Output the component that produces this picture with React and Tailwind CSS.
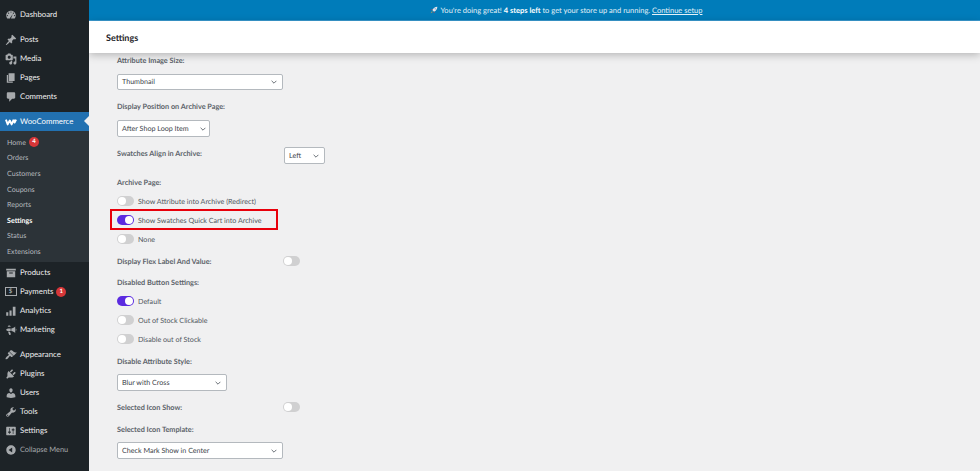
import React from "react";

const P = {
  dashboard: "M3.76 16h12.48c1.1-1.37 1.76-3.11 1.76-5 0-4.42-3.58-8-8-8s-8 3.58-8 8c0 1.89.66 3.63 1.76 5zM10 4c.55 0 1 .45 1 1s-.45 1-1 1-1-.45-1-1 .45-1 1-1zM6 6c.55 0 1 .45 1 1s-.45 1-1 1-1-.45-1-1 .45-1 1-1zm8 0c.55 0 1 .45 1 1s-.45 1-1 1-1-.45-1-1 .45-1 1-1zm-5.4 8.6L13 8.500l-2.900 6.900c-.4.8-2.200.1-1.500-.8zM4 10c.55 0 1 .45 1 1s-.45 1-1 1-1-.45-1-1 .45-1 1-1zm12 0c.55 0 1 .45 1 1s-.45 1-1 1-1-.45-1-1 .45-1 1-1z",
  posts: "M10.44 3.02l1.82-1.82 6.36 6.35-1.83 1.82c-1.05-.68-2.48-.57-3.41.36l-.75.75c-.92.93-1.04 2.35-.35 3.41l-1.83 1.82-2.41-2.41-2.8 2.79c-.42.42-3.38 2.71-3.8 2.29s1.86-3.39 2.28-3.81l2.79-2.79L4.1 9.36l1.83-1.82c1.05.69 2.48.57 3.4-.36l.75-.75c.93-.92 1.05-2.35.36-3.41z",
  media: "M13 11V4c0-.55-.45-1-1-1h-1.67L9 1H5L3.67 3H2c-.55 0-1 .45-1 1v7c0 .55.45 1 1 1h10c.55 0 1-.45 1-1zM7 4.5c1.38 0 2.5 1.12 2.5 2.5S8.38 9.5 7 9.5 4.5 8.38 4.5 7 5.62 4.5 7 4.5zM14 6h5v10.5c0 1.38-1.12 2.5-2.5 2.5S14 17.88 14 16.5s1.12-2.5 2.5-2.5c.17 0 .34.02.5.05V9h-3V6zm-4 8.05V13h2v3.5c0 1.38-1.12 2.5-2.5 2.5S7 17.88 7 16.5 8.12 14 9.5 14c.17 0 .34.02.5.05z",
  pages: "M6 15V2h10v13H6zm-1 1h8v2H3V5h2v11z",
  comments: "M5 2h10c1.1 0 2 .9 2 2v7c0 1.1-.9 2-2 2h-3l-5 5v-5H5c-1.1 0-2-.9-2-2V4c0-1.1.9-2 2-2z",
  products: "M2 3h16v3H2V3zm1 4h14v10H3V7zm4 2v2h6V9H7z",
  analytics: "M2 12h3.500v6H2v-6zm5.500-3H11v9H7.500V9zM13 3h4.500v15H13V3z",
  marketing: "M18 7.500c.6.5 1 1.200 1 2s-.4 1.500-1 2V7.500zM17 4v11c-1.500-1.800-4-3-6.500-3.300V7.300C13 7 15.500 5.800 17 4zM9.500 7.300v4.400H6.500c-2.500 0-4.500-1-4.500-2.200S4 7.300 6.500 7.300h3zM5 12.700l3.300.2 1.700 4.600-3 .8L5 12.700zM7 2.500c1.200 0 2.200.8 2.500 2H4.500c.3-1.200 1.300-2 2.500-2z",
  appearance: "M14.48 11.06L7.41 3.99l1.5-1.5c.5-.56 2.3-.47 3.51.32 1.21.8 1.43 1.28 2.91 2.1 1.18.64 2.45 1.26 4.45.85zm-.71.71L6.7 4.7 4.930 6.470c-.39.39-.39 1.020 0 1.410l1.060 1.060c.39.39.39 1.030 0 1.420-.6.6-1.430 1.110-2.210 1.690-.35.26-.7.53-1.010.84-1.350 1.350-2.280 3.300-1.580 4s2.650-.23 4-1.580c.31-.31.58-.66.84-1.010.58-.78 1.090-1.610 1.690-2.210.39-.39 1.030-.39 1.420 0l1.060 1.060c.39.39 1.020.39 1.410 0z",
  plugins: "M13.11 4.36L9.87 7.6 8 5.73l3.24-3.24c.35-.34 1.05-.2 1.56.32.52.51.66 1.21.31 1.55zm-8 1.77l.91-1.12 9.01 9.01-1.19.84c-.71.71-2.63 1.16-3.82 1.16H6.140L4.900 17.260c-.59.59-1.540.59-2.120 0-.59-.58-.59-1.530 0-2.120l1.240-1.240v-3.880c0-1.130.4-3.190 1.090-3.890zm7.260 3.970l3.240-3.240c.34-.35 1.040-.21 1.550.31.52.51.66 1.210.31 1.550l-3.240 3.250z",
  users: "M10 9.25c-2.270 0-2.730-3.440-2.730-3.440C7 4.020 7.820 2 9.970 2c2.160 0 2.980 2.020 2.710 3.810 0 0-.41 3.440-2.680 3.440zm0 2.570L12.720 10c2.390 0 4.520 2.330 4.520 4.530v2.490s-3.650 1.130-7.240 1.130c-3.650 0-7.240-1.130-7.240-1.130v-2.490c0-2.250 1.940-4.480 4.470-4.480z",
  tools: "M16.680 9.770c-1.340 1.340-3.300 1.670-4.950.99l-5.410 6.520c-.99.99-2.590.99-3.580 0s-.99-2.590 0-3.570l6.520-5.420c-.68-1.650-.35-3.610.99-4.950 1.280-1.280 3.120-1.620 4.720-1.060l-2.890 2.890 2.820 2.820 2.860-2.870c.53 1.580.18 3.390-1.080 4.650zM3.810 16.210c.4.39 1.040.39 1.430 0 .4-.4.4-1.040 0-1.430-.39-.4-1.030-.4-1.430 0-.39.39-.39 1.030 0 1.430z",
  settings: "M18 16V4c0-.55-.45-1-1-1H3c-.55 0-1 .45-1 1v12c0 .55.45 1 1 1h14c.55 0 1-.45 1-1zM8 11h1c.55 0 1 .45 1 1s-.45 1-1 1H8v1.500c0 .28-.22.5-.5.5s-.5-.22-.5-.5V13H6c-.55 0-1-.45-1-1s.45-1 1-1h1V5.500c0-.28.22-.5.5-.5s.5.22.5.5V11zm5-2h-1c-.55 0-1-.45-1-1s.45-1 1-1h1V5.500c0-.28.22-.5.5-.5s.5.22.5.5V7h1c.55 0 1 .45 1 1s-.45 1-1 1h-1v5.500c0 .28-.22.5-.5.5s-.5-.22-.5-.5V9z",
  collapse: "M10 2.160c4.330 0 7.840 3.510 7.840 7.840s-3.510 7.840-7.840 7.840S2.160 14.330 2.160 10 5.670 2.160 10 2.160zM12 14V6l-6 4z",
};

function Ico({ name, color = "#a7aaad", size = 12 }) {
  return (
    <svg viewBox="0 0 20 20" width={size} height={size} className="shrink-0">
      <path d={P[name]} fill={color} fillRule="evenodd" />
    </svg>
  );
}

function PayIcon() {
  return (
    <span className="w-[12px] h-[9px] border border-[#a7aaad] flex items-center justify-center text-[6px] leading-none font-bold text-[#a7aaad] shrink-0">
      $
    </span>
  );
}

function WooIcon() {
  return (
    <svg viewBox="0 0 20 12" width={12} height={8} className="shrink-0">
      <path d="M1.500 2 L4.500 10 L8 3.500 L11 10 L14.500 2 M14.500 2 L16 7 L18.500 2" fill="none" stroke="#ffffff" strokeWidth="3.200" strokeLinejoin="round" />
    </svg>
  );
}

function Item({ icon, label, children, mt = "", dim = false }) {
  return (
    <div className={`h-[19px] flex items-center ${mt}`}>
      <span className="w-[20px] flex justify-center shrink-0 pl-[1px]">
        {icon === "pay" ? <PayIcon /> : <Ico name={icon} />}
      </span>
      <span className={`leading-none ${dim ? "text-[7.400px] text-[#a7aaad]" : "text-[7.800px] text-[#f0f0f1]"}`}>{label}</span>
      {children}
    </div>
  );
}

function Badge({ n, ml }) {
  return (
    <span className={`w-[10px] h-[10px] rounded-full bg-[#d63638] text-white text-[6px] font-bold leading-none flex items-center justify-center ${ml}`}>
      {n}
    </span>
  );
}

function Sub({ label, active, children }) {
  return (
    <div className={`h-[15.6px] pl-[7px] flex items-center text-[7.100px] leading-none ${active ? "text-white font-bold" : "text-[#b4b9be]"}`}>
      {label}
      {children}
    </div>
  );
}

function Sidebar() {
  return (
    <aside className="w-[89px] shrink-0 h-[471px] bg-[#1d2327] pt-[5px] overflow-hidden">
      <Item icon="dashboard" label="Dashboard" />
      <Item icon="posts" label="Posts" mt="mt-[6px]" />
      <Item icon="media" label="Media" />
      <Item icon="pages" label="Pages" />
      <Item icon="comments" label="Comments" />
      <div className="relative mt-[6px] h-[19px] bg-[#2271b1] flex items-center">
        <span className="w-[20px] flex justify-center shrink-0 pl-[1px]">
          <WooIcon />
        </span>
        <span className="text-[7.800px] leading-none text-white">WooCommerce</span>
        <span className="absolute right-0 top-[4px] w-0 h-0 border-y-[5px] border-y-transparent border-r-[5px] border-r-[#f0f0f1]" />
      </div>
      <div className="bg-[#2c3338] pt-[3.600px] pb-[3px] mb-[1px]">
        <Sub label="Home"><Badge n="4" ml="ml-[3px]" /></Sub>
        <Sub label="Orders" />
        <Sub label="Customers" />
        <Sub label="Coupons" />
        <Sub label="Reports" />
        <Sub label="Settings" active />
        <Sub label="Status" />
        <Sub label="Extensions" />
      </div>
      <Item icon="products" label="Products" />
      <Item icon="pay" label="Payments"><Badge n="1" ml="ml-[3px]" /></Item>
      <Item icon="analytics" label="Analytics" />
      <Item icon="marketing" label="Marketing" />
      <Item icon="appearance" label="Appearance" mt="mt-[6px]" />
      <Item icon="plugins" label="Plugins" />
      <Item icon="users" label="Users" />
      <Item icon="tools" label="Tools" />
      <Item icon="settings" label="Settings" />
      <Item icon="collapse" label="Collapse Menu" dim />
    </aside>
  );
}

function Label({ children, mt = "", w = "" }) {
  return <div className={`h-[12px] pt-[1px] flex items-center text-[7.300px] leading-none font-bold text-[#5c636a] ${mt} ${w}`}>{children}</div>;
}

function Select({ value, w, mt = "", chev = "pr-[5px]", h = "h-[17px]" }) {
  return (
    <div className={`${h} bg-white border border-[#b4b9be] rounded-[2px] pl-[4px] ${chev} flex items-center justify-between text-[7.150px] leading-none text-[#3c434a] shrink-0 ${w} ${mt}`}>
      <span className="whitespace-nowrap">{value}</span>
      <svg viewBox="0 0 10 6" width={6} height={4} className="shrink-0">
        <path d="M1 1 L5 5 L9 1" fill="none" stroke="#50575e" strokeWidth="1.400" />
      </svg>
    </div>
  );
}

function Toggle({ on }) {
  return (
    <span className={`w-[17px] h-[10px] rounded-full flex items-center shrink-0 px-[1px] ${on ? "bg-[#5b2be0] justify-end" : "bg-[#d0d0d1] justify-start"}`}>
      <span className="w-[8px] h-[8px] rounded-full bg-white" />
    </span>
  );
}

function ToggleRow({ label, on, mt = "mt-[7px]", children }) {
  return (
    <div className={`relative h-[12px] flex items-center gap-[4px] ${mt}`}>
      <Toggle on={on} />
      <span className="pt-[1px] text-[7.150px] leading-none text-[#50575e] whitespace-nowrap">{label}</span>
      {children}
    </div>
  );
}

function Rocket() {
  return (
    <svg viewBox="0 0 12 12" width={8} height={8} className="inline-block mr-[3px] align-[-1px]">
      <path d="M11 1 C7.500 1 5 3 3.500 6 L6 8.500 C9 7 11 4.500 11 1z" fill="#e8e6ea" />
      <circle cx="7.800" cy="4.200" r="1" fill="#5b8fd0" />
      <path d="M3.500 6 L1 6.500 L3 4.500z M6 8.500 L5.500 11 L7.500 9z" fill="#d63638" />
      <path d="M3 8 L1 11 L4 9z" fill="#f0a030" />
    </svg>
  );
}

export default function App() {
  return (
    <div className="w-[980px] h-[471px] overflow-hidden flex bg-[#f0f0f1] [text-rendering:geometricPrecision]" style={{ fontFamily: 'Lato, "Open Sans", sans-serif' }}>
      <Sidebar />
      <main className="flex-1 min-w-0 h-[471px] overflow-hidden">
        <div className="h-[21px] bg-[#007cba] border-b border-[#3a9ad0] flex items-center justify-center pl-[63px] text-[7.500px] leading-none text-[#e6f2f8]">
          <span>
            <Rocket />
            You're doing great! <b className="font-bold text-white">4 steps left</b> to get your store up and running.{" "}
            <span className="underline">Continue setup</span>
          </span>
        </div>
        <header className="relative h-[32px] bg-white pl-[17px] flex items-center text-[9px] leading-none font-bold text-[#1d2327] shadow-[0_2px_8px_rgba(0,0,0,0.25)]">
          Settings
        </header>
        <div className="pl-[28px] pt-[1px]">
          <Label>Attribute Image Size:</Label>
          <Select value="Thumbnail" w="w-[166px]" mt="mt-[8px]" h="h-[16px]" />
          <Label mt="mt-[10px]">Display Position on Archive Page:</Label>
          <Select value="After Shop Loop Item" w="w-[93px]" mt="mt-[8px]" chev="pr-[3px]" />
          <div className="flex items-start mt-[10px]">
            <Label w="w-[167px]">Swatches Align in Archive:</Label>
            <Select value="Left" w="w-[41px]" />
          </div>
          <Label mt="mt-[12px]">Archive Page:</Label>
          <ToggleRow label="Show Attribute into Archive (Redirect)" />
          <ToggleRow label="Show Swatches Quick Cart into Archive" on>
            <span className="absolute left-[-7px] top-[-5px] w-[168px] h-[21px] border-2 border-[#e8000b]" />
          </ToggleRow>
          <ToggleRow label="None" />
          <div className="flex items-center mt-[10px]">
            <Label w="w-[166px]">Display Flex Label And Value:</Label>
            <Toggle />
          </div>
          <Label mt="mt-[9px]">Disabled Button Settings:</Label>
          <ToggleRow label="Default" on />
          <ToggleRow label="Out of Stock Clickable" />
          <ToggleRow label="Disable out of Stock" />
          <Label mt="mt-[10px]">Disable Attribute Style:</Label>
          <Select value="Blur with Cross" w="w-[110px]" mt="mt-[7px]" />
          <div className="flex items-center mt-[10px]">
            <Label w="w-[166px]">Selected Icon Show:</Label>
            <Toggle />
          </div>
          <Label mt="mt-[10px]">Selected Icon Template:</Label>
          <Select value="Check Mark Show in Center" w="w-[166px]" mt="mt-[7px]" />
        </div>
      </main>
    </div>
  );
}
